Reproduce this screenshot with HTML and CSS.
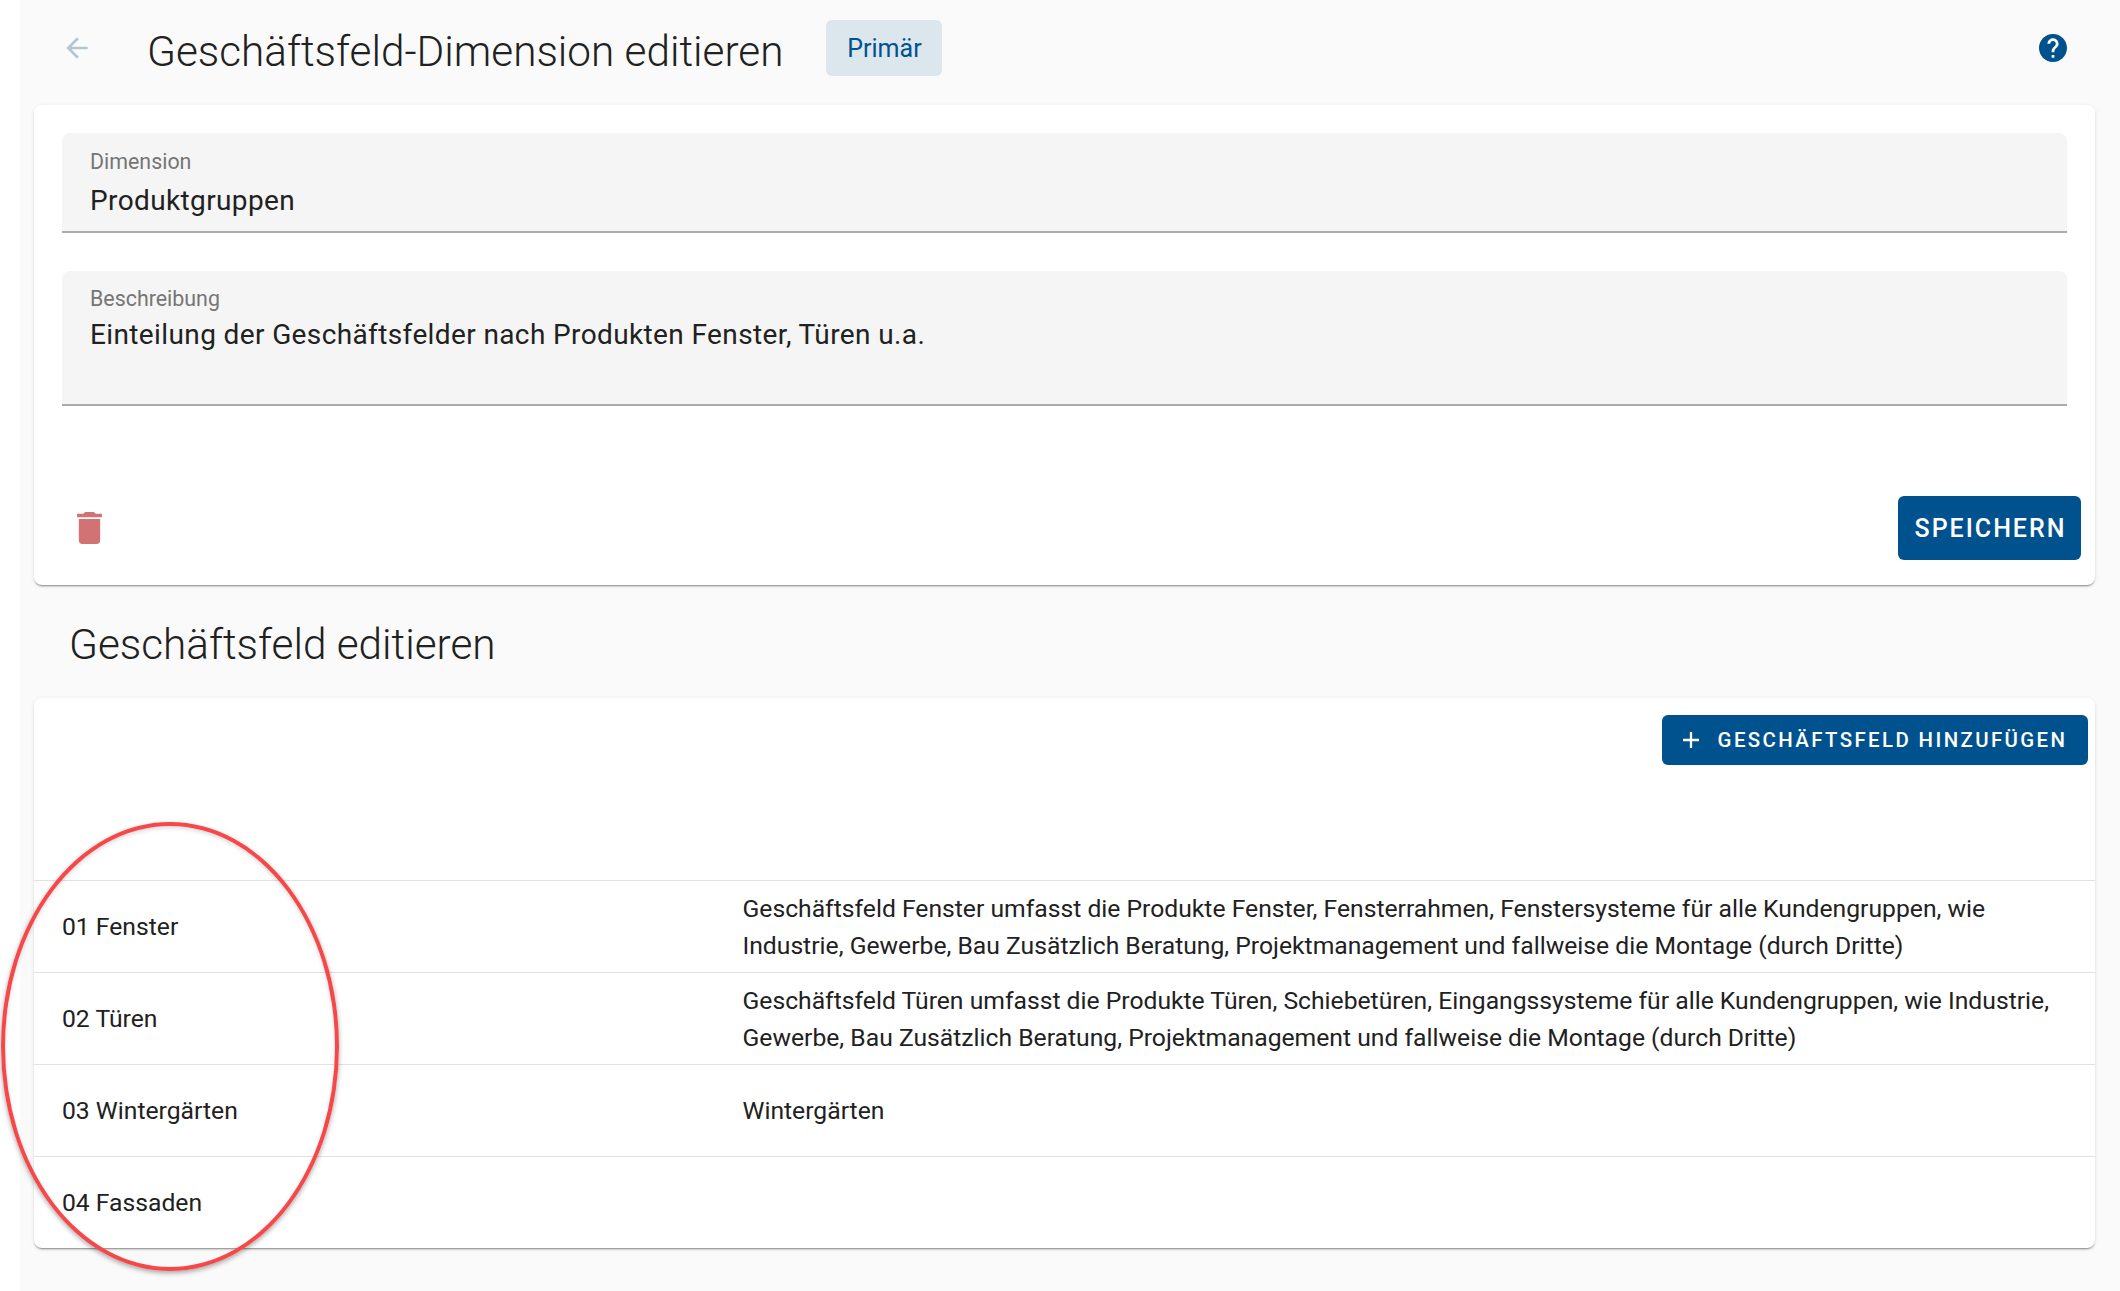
FILE: index.html
```html
<!DOCTYPE html>
<html lang="de">
<head>
<meta charset="utf-8">
<title>Geschäftsfeld-Dimension editieren</title>
<link rel="stylesheet" href="styles.css">
</head>
<body>
<main class="page">
  <header class="topbar">
    <svg class="back" viewBox="0 0 24 24"><path d="M20 11H7.83l5.59-5.59L12 4l-8 8 8 8 1.41-1.41L7.83 13H20v-2z"/></svg>
    <h1 class="title">Geschäftsfeld-Dimension editieren</h1>
    <span class="chip">Primär</span>
    <svg class="help" viewBox="2 2 20 20"><path d="M12 2C6.48 2 2 6.48 2 12s4.48 10 10 10 10-4.48 10-10S17.52 2 12 2zm1 17h-2v-2h2v2zm2.07-7.75l-.9.92C13.45 12.9 13 13.5 13 15h-2v-.5c0-1.1.45-2.1 1.17-2.83l1.24-1.26c.37-.36.59-.86.59-1.41 0-1.1-.9-2-2-2s-2 .9-2 2H8c0-2.21 1.79-4 4-4s4 1.79 4 4c0 .88-.36 1.68-.93 2.25z"/></svg>
  </header>

  <section class="card form-card">
    <div class="field field-single">
      <label class="field-label">Dimension</label>
      <div class="field-value">Produktgruppen</div>
    </div>
    <div class="field field-multi">
      <label class="field-label">Beschreibung</label>
      <div class="field-value">Einteilung der Geschäftsfelder nach Produkten Fenster, Türen u.a.</div>
    </div>
    <div class="form-actions">
      <svg class="trash" viewBox="5 3 14 18"><path d="M6 19c0 1.1.9 2 2 2h8c1.1 0 2-.9 2-2V7H6v12zM19 4h-3.5l-1-1h-5l-1 1H5v2h14V4z"/></svg>
      <button class="btn btn-large">SPEICHERN</button>
    </div>
  </section>

  <h2 class="subtitle">Geschäftsfeld editieren</h2>

  <section class="card table-card">
    <div class="table-actions">
      <button class="btn btn-add">
        <svg class="plus" viewBox="5 5 14 14"><path d="M19 13h-6v6h-2v-6H5v-2h6V5h2v6h6v2z"/></svg>
        GESCHÄFTSFELD HINZUFÜGEN
      </button>
    </div>
    <div class="row">
      <div class="cell-name">01 Fenster</div>
      <div class="cell-desc">Geschäftsfeld Fenster umfasst die Produkte Fenster, Fensterrahmen, Fenstersysteme für alle Kundengruppen, wie Industrie, Gewerbe, Bau Zusätzlich Beratung, Projektmanagement und fallweise die Montage (durch Dritte)</div>
    </div>
    <div class="row">
      <div class="cell-name">02 Türen</div>
      <div class="cell-desc">Geschäftsfeld Türen umfasst die Produkte Türen, Schiebetüren, Eingangssysteme für alle Kundengruppen, wie Industrie, Gewerbe, Bau Zusätzlich Beratung, Projektmanagement und fallweise die Montage (durch Dritte)</div>
    </div>
    <div class="row">
      <div class="cell-name">03 Wintergärten</div>
      <div class="cell-desc">Wintergärten</div>
    </div>
    <div class="row">
      <div class="cell-name">04 Fassaden</div>
      <div class="cell-desc"></div>
    </div>
  </section>
</main>
<div class="highlight"></div>
</body>
</html>
```
FILE: styles.css
```css
* { box-sizing: border-box; }
html, body { margin: 0; height: 100%; }
body {
  background: #fff;
  font-family: Roboto, "Liberation Sans", sans-serif;
  color: #212121;
  overflow: hidden;
}
.page {
  margin-left: 20px;
  min-height: 1291px;
  background: #fafafa;
  padding: 0 25px 0 14px;
}
.topbar {
  height: 105px;
  display: flex;
  align-items: center;
  padding: 0 0 10px 24px;
}
.back { width: 32px; height: 32px; fill: #b4c6d4; flex: none; margin-left: 3px; }
.title {
  margin: 8px 0 0 54px;
  font-weight: 300;
  font-size: 42.3px;
  line-height: 56px;
  color: #212121;
}
.chip {
  margin-left: 43px;
  width: 116px;
  height: 56px;
  padding-top: 2px;
  border-radius: 6px;
  background: #dce6ed;
  color: #00528e;
  font-size: 25px;
  display: flex;
  align-items: center;
  justify-content: center;
}
.help { width: 28px; height: 28px; fill: #00528e; margin-left: auto; margin-right: 28px; flex: none; }
.card {
  background: #fff;
  border-radius: 8px;
  box-shadow: 0 2px 2px -1px rgba(0,0,0,.45), 0 1px 5px rgba(0,0,0,.08);
}
.form-card { height: 480px; padding: 28px 28px 0; position: relative; }
.field {
  background: #f5f5f5;
  border-radius: 8px 8px 0 0;
  border-bottom: 2px solid #ababab;
  padding: 0 28px;
}
.field-single { height: 100px; padding-top: 15px; }
.field-multi { height: 135px; margin-top: 38px; padding-top: 14px; }
.field-label { display: block; font-size: 21.4px; line-height: 28px; color: #757575; }
.field-value { font-size: 28px; line-height: 36px; color: #212121; letter-spacing: .38px; }
.field-single .field-value { margin-top: 7px; }
.field-multi .field-value { margin-top: 4px; }
.form-actions {
  display: flex;
  align-items: center;
  justify-content: space-between;
  margin: 90px -14px 0 15px;
}
.trash { width: 25px; height: 32px; fill: #d17274; flex: none; }
.btn {
  border: 0;
  background: #00528e;
  color: #fff;
  font-family: inherit;
  font-weight: 500;
  border-radius: 6px;
  display: flex;
  align-items: center;
  justify-content: center;
  white-space: nowrap;
}
.btn-large { width: 183px; height: 64px; padding-left: 8px; font-size: 25px; letter-spacing: 2px; }
.subtitle {
  margin: 0;
  height: 113px;
  padding: 32px 0 0 35px;
  font-weight: 300;
  font-size: 42.3px;
  line-height: 56px;
  color: #212121;
}
.table-card { height: 550px; }
.table-actions { height: 182px; padding: 17px 7px 0 0; display: flex; justify-content: flex-end; align-items: flex-start; }
.btn-add { width: 426px; height: 50px; font-size: 20.4px; letter-spacing: 2.4px; gap: 19px; }
.plus { width: 16px; height: 16px; fill: #fff; flex: none; }
.row {
  height: 92px;
  border-top: 1.5px solid #e2e2e2;
  display: grid;
  grid-template-columns: 680.5px 1fr;
  align-items: center;
  padding: 0 28px;
}
.cell-name, .cell-desc { font-size: 24.7px; line-height: 37px; color: #212121; }
.highlight {
  position: absolute;
  left: 1px;
  top: 822px;
  width: 338px;
  height: 449px;
  border: 4px solid #f64848;
  border-radius: 50%;
  box-shadow: 0 2px 5px rgba(0,0,0,.35), inset 0 2px 4px rgba(0,0,0,.15);
}
```
